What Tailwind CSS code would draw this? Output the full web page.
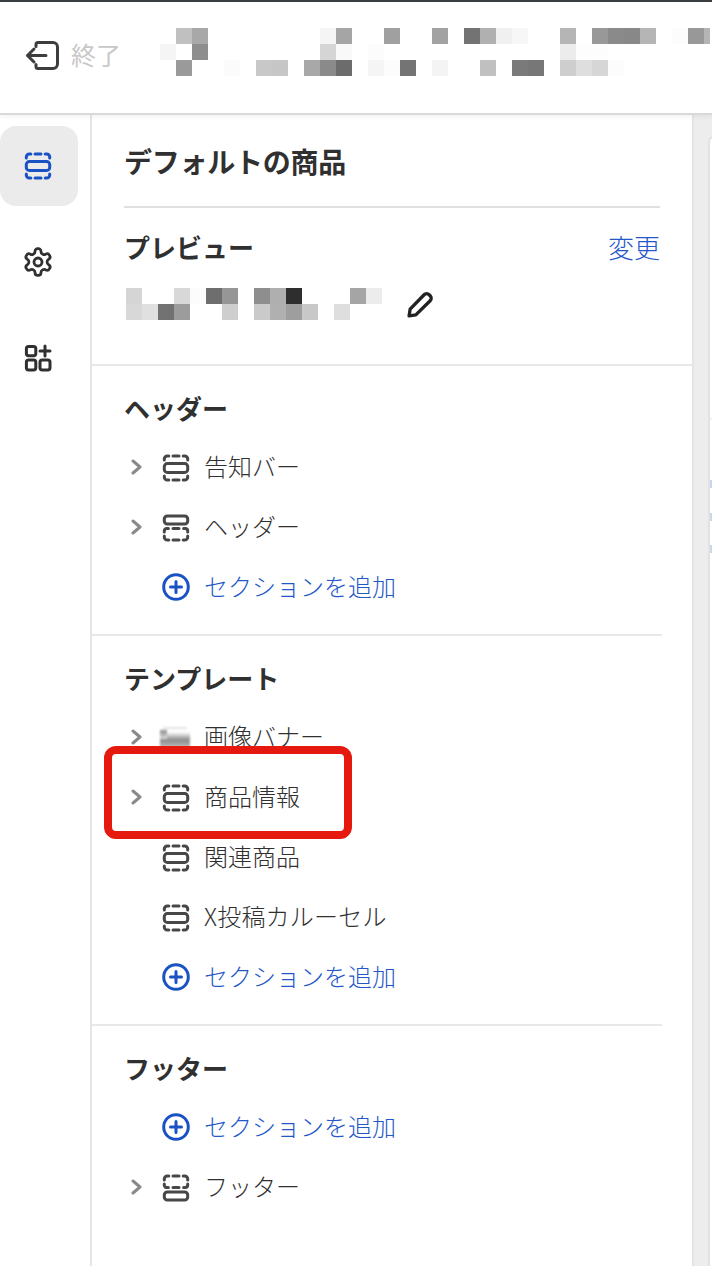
<!doctype html>
<html lang="ja">
<head>
<meta charset="utf-8">
<script src="https://cdn.jsdelivr.net/npm/@tailwindcss/browser@4"></script>
</head>
<body>
<div class="relative w-[712px] h-[1266px] overflow-hidden bg-white flex flex-col text-[#303030] font-['Noto_Sans_CJK_JP','Noto_Sans_CJK_SC',sans-serif]">

  <!-- top bar -->
  <header class="relative z-10 h-[115px] shrink-0 border-t-2 border-t-[#3a3d40] border-b-2 border-b-[#d9d9d9] shadow-[0_2px_4px_rgba(0,0,0,0.05)] bg-white flex items-center">
    <svg class="ml-[25px] w-[34px] h-[30px] shrink-0 -mt-[3px]" viewBox="0 0 34 30" fill="none" stroke="#3d3d3d" stroke-width="3" stroke-linecap="round" stroke-linejoin="round">
      <path d="M11 5.5V3.5a2 2 0 0 1 2-2h15a4.5 4.5 0 0 1 4.5 4.5v17a4.5 4.5 0 0 1-4.5 4.5H13a2 2 0 0 1-2-2v-2"/>
      <path d="M2.5 14.5H21M9 8l-6.5 6.5L9 21"/>
    </svg>
    <span class="ml-[12px] text-[25px] leading-none text-[#c8c8c8] -mt-[6px]">終了</span>
    <div class="absolute left-[160px] top-[26px] grid grid-cols-[repeat(35,16px)] grid-rows-[repeat(3,16px)]">
      <i class="col-start-2 row-start-1 bg-[#c0c0c0]"></i><i class="col-start-3 row-start-1 bg-[#a8a8a8]"></i><i class="col-start-11 row-start-1 bg-[#f5f5f5]"></i><i class="col-start-12 row-start-1 bg-[#a5a5a5]"></i><i class="col-start-15 row-start-1 bg-[#a0a0a0]"></i><i class="col-start-18 row-start-1 bg-[#a2a2a2]"></i><i class="col-start-20 row-start-1 bg-[#737373]"></i><i class="col-start-21 row-start-1 bg-[#b0b0b0]"></i><i class="col-start-22 row-start-1 bg-[#f0f0f0]"></i><i class="col-start-23 row-start-1 bg-[#f7f7f7]"></i><i class="col-start-26 row-start-1 bg-[#b5b5b5]"></i><i class="col-start-28 row-start-1 bg-[#989898]"></i><i class="col-start-29 row-start-1 bg-[#8a8a8a]"></i><i class="col-start-30 row-start-1 bg-[#888888]"></i><i class="col-start-31 row-start-1 bg-[#b5b5b5]"></i><i class="col-start-33 row-start-1 bg-[#fcfcfc]"></i><i class="col-start-34 row-start-1 bg-[#989898]"></i><i class="col-start-35 row-start-1 w-[6px] bg-[#b5b5b5]"></i>
      <i class="col-start-1 row-start-2 bg-[#f5f5f5]"></i><i class="col-start-3 row-start-2 bg-[#8e8e8e]"></i><i class="col-start-11 row-start-2 bg-[#d5d5d5]"></i><i class="col-start-12 row-start-2 bg-[#f9f9f9]"></i><i class="col-start-14 row-start-2 bg-[#fcfcfc]"></i><i class="col-start-26 row-start-2 bg-[#ececec]"></i><i class="col-start-27 row-start-2 bg-[#fdfdfd]"></i><i class="col-start-28 row-start-2 bg-[#fdfdfd]"></i>
      <i class="col-start-2 row-start-3 bg-[#9a9a9a]"></i><i class="col-start-5 row-start-3 bg-[#fbfbfb]"></i><i class="col-start-7 row-start-3 bg-[#c8c8c8]"></i><i class="col-start-8 row-start-3 bg-[#c6c6c6]"></i><i class="col-start-10 row-start-3 bg-[#a8a8a8]"></i><i class="col-start-11 row-start-3 bg-[#8a8a8a]"></i><i class="col-start-12 row-start-3 bg-[#6c6c6c]"></i><i class="col-start-14 row-start-3 bg-[#f5f5f5]"></i><i class="col-start-15 row-start-3 bg-[#fcfcfc]"></i><i class="col-start-16 row-start-3 bg-[#747474]"></i><i class="col-start-18 row-start-3 bg-[#f4f4f4]"></i><i class="col-start-21 row-start-3 bg-[#c0c0c0]"></i><i class="col-start-23 row-start-3 bg-[#7a7a7a]"></i><i class="col-start-24 row-start-3 bg-[#777777]"></i><i class="col-start-26 row-start-3 bg-[#cecece]"></i><i class="col-start-27 row-start-3 bg-[#dedede]"></i><i class="col-start-28 row-start-3 bg-[#d6d6d6]"></i><i class="col-start-29 row-start-3 bg-[#fcfcfc]"></i>
    </div>
  </header>

  <div class="flex flex-1 min-h-0">
    <!-- rail -->
    <nav class="w-[92px] shrink-0 border-r-2 border-r-[#e5e5e5] flex flex-col pt-[11px]">
      <div class="w-[78px] h-[80px] rounded-[16px] bg-[#ebebeb] flex items-center justify-center pr-[2px]">
        <svg class="w-[28px] h-[28px]" viewBox="0 0 28 28" fill="none" stroke="#1a52c6" stroke-width="3" stroke-linecap="round">
          <path d="M2.3 6V5a3 3 0 0 1 3-3h1.5M11 2h6M21.2 2h1.5a3 3 0 0 1 3 3v1M2.3 22v1a3 3 0 0 0 3 3h1.5M11 26h6M21.2 26h1.5a3 3 0 0 0 3-3v-1"/>
          <rect x="2.3" y="9.6" width="23.4" height="8.8" rx="3"/>
        </svg>
      </div>
      <div class="w-[76px] h-[32px] mt-[40px] flex justify-center">
        <svg class="w-[32px] h-[32px]" viewBox="0 0 24 24" fill="none" stroke="#303030" stroke-width="2.1" stroke-linecap="round" stroke-linejoin="round">
          <path d="M12.22 2h-.44a2 2 0 0 0-2 2v.18a2 2 0 0 1-1 1.73l-.43.25a2 2 0 0 1-2 0l-.15-.08a2 2 0 0 0-2.73.73l-.22.38a2 2 0 0 0 .73 2.73l.15.1a2 2 0 0 1 1 1.72v.51a2 2 0 0 1-1 1.74l-.15.09a2 2 0 0 0-.73 2.73l.22.38a2 2 0 0 0 2.73.73l.15-.08a2 2 0 0 1 2 0l.43.25a2 2 0 0 1 1 1.73V20a2 2 0 0 0 2 2h.44a2 2 0 0 0 2-2v-.18a2 2 0 0 1 1-1.73l.43-.25a2 2 0 0 1 2 0l.15.08a2 2 0 0 0 2.73-.73l.22-.39a2 2 0 0 0-.73-2.73l-.15-.08a2 2 0 0 1-1-1.74v-.5a2 2 0 0 1 1-1.74l.15-.09a2 2 0 0 0 .73-2.73l-.22-.38a2 2 0 0 0-2.73-.73l-.15.08a2 2 0 0 1-2 0l-.43-.25a2 2 0 0 1-1-1.73V4a2 2 0 0 0-2-2z"/>
          <circle cx="12" cy="12" r="3"/>
        </svg>
      </div>
      <div class="w-[76px] h-[28px] mt-[66px] flex justify-center">
        <svg class="w-[28px] h-[28px]" viewBox="0 0 28 28" fill="none" stroke="#303030" stroke-width="3" stroke-linecap="round" stroke-linejoin="round">
          <rect x="2.4" y="2.4" width="9.4" height="9.4" rx="2.2"/>
          <rect x="2.4" y="16" width="9.4" height="10" rx="2.2"/>
          <rect x="16" y="16" width="10" height="10" rx="2.2"/>
          <path d="M21 2v10M16 7h10"/>
        </svg>
      </div>
    </nav>

    <!-- panel -->
    <main class="w-[600px] shrink-0">
      <div class="pl-[33px] pr-[32px]">
        <h1 class="h-[91px] flex items-center text-[28px] leading-none font-semibold -ml-[1px] tracking-[-0.25px]">デフォルトの商品</h1>
        <div class="-ml-[1px] h-[2px] bg-[#e0e0e0]"></div>
        <div class="mt-[19px] h-[40px] flex items-center justify-between">
          <h2 class="text-[26px] font-semibold leading-none -ml-[1px]">プレビュー</h2>
          <a class="text-[26px] leading-none text-[#2458c8] font-light">変更</a>
        </div>
        <div class="mt-[21px] pb-[44px] flex items-start">
          <div class="w-[256px] grid grid-cols-[repeat(16,16px)] grid-rows-[repeat(2,16px)] ml-[1px]">
            <i class="col-start-1 row-start-1 bg-[#d5d5d5]"></i><i class="col-start-4 row-start-1 bg-[#d8d8d8]"></i><i class="col-start-5 row-start-1 bg-[#fcfcfc]"></i><i class="col-start-6 row-start-1 bg-[#6e6e6e]"></i><i class="col-start-7 row-start-1 bg-[#969696]"></i><i class="col-start-9 row-start-1 bg-[#8e8e8e]"></i><i class="col-start-10 row-start-1 bg-[#afafaf]"></i><i class="col-start-11 row-start-1 bg-[#2e2e2e]"></i><i class="col-start-15 row-start-1 bg-[#a5a5a5]"></i><i class="col-start-16 row-start-1 bg-[#ececec]"></i>
            <i class="col-start-1 row-start-2 bg-[#d8d8d8]"></i><i class="col-start-2 row-start-2 bg-[#e0e0e0]"></i><i class="col-start-3 row-start-2 bg-[#727272]"></i><i class="col-start-4 row-start-2 bg-[#9c9c9c]"></i><i class="col-start-7 row-start-2 bg-[#cecece]"></i><i class="col-start-9 row-start-2 bg-[#cacaca]"></i><i class="col-start-10 row-start-2 bg-[#b0b0b0]"></i><i class="col-start-11 row-start-2 bg-[#9e9e9e]"></i><i class="col-start-12 row-start-2 bg-[#c8c8c8]"></i><i class="col-start-14 row-start-2 bg-[#dedede]"></i>
          </div>
          <svg class="ml-[25px] mt-[3px] w-[27px] h-[27px] shrink-0" viewBox="0 0 26 26" fill="none" stroke="#222222" stroke-width="3.2" stroke-linejoin="round" stroke-linecap="round">
            <path d="M2 24l1-6.5L16.5 3.6a3.4 3.4 0 0 1 4.8 0l1 1a3.4 3.4 0 0 1 0 4.8L8.5 23z"/>
          </svg>
        </div>
      </div>

      <!-- header group -->
      <section class="border-t-2 border-t-[#e8e8e8] pb-[18px]">
        <h2 class="h-[70px] pt-[30px] pl-[32px] text-[26px] leading-[24px] font-semibold">ヘッダー</h2>
        <div class="h-[60px] flex items-center pl-[33px]">
          <svg class="ml-[6px] w-[31px] h-[16px] shrink-0 mt-[2px]" viewBox="0 0 31 16" fill="none" stroke="#8a8a8a" stroke-width="3" stroke-linecap="round" stroke-linejoin="round"><path d="M2 2l7 6-7 6"/></svg>
          <svg class="w-[28px] h-[28px] shrink-0 mt-[3px]" viewBox="0 0 28 28" fill="none" stroke="#474747" stroke-width="3" stroke-linecap="round"><path d="M2.3 6V5a3 3 0 0 1 3-3h1.5M11 2h6M21.2 2h1.5a3 3 0 0 1 3 3v1M2.3 22v1a3 3 0 0 0 3 3h1.5M11 26h6M21.2 26h1.5a3 3 0 0 0 3-3v-1"/><rect x="2.3" y="9.6" width="23.4" height="8.8" rx="3"/></svg>
          <span class="ml-[14px] text-[24px] leading-none text-[#303030] font-light">告知バー</span>
        </div>
        <div class="h-[60px] flex items-center pl-[33px]">
          <svg class="ml-[6px] w-[31px] h-[16px] shrink-0 mt-[2px]" viewBox="0 0 31 16" fill="none" stroke="#8a8a8a" stroke-width="3" stroke-linecap="round" stroke-linejoin="round"><path d="M2 2l7 6-7 6"/></svg>
          <svg class="w-[28px] h-[28px] shrink-0 mt-[3px]" viewBox="0 0 28 28" fill="none" stroke="#474747" stroke-width="3" stroke-linecap="round"><rect x="2.3" y="2" width="23.4" height="8" rx="3"/><path d="M2.3 18v-1a2.6 2.6 0 0 1 2.6-2.6h1.5M11 14.4h6M21.6 14.4h1.5a2.6 2.6 0 0 1 2.6 2.6v1M2.3 22v1a3 3 0 0 0 3 3h1.5M11 26h6M21.2 26h1.5a3 3 0 0 0 3-3v-1"/></svg>
          <span class="ml-[14px] text-[24px] leading-none text-[#303030] font-light">ヘッダー</span>
        </div>
        <div class="h-[60px] flex items-center pl-[70px]">
          <svg class="w-[28px] h-[28px] shrink-0 mt-[1px]" viewBox="0 0 28 28" fill="none" stroke="#1a52c6" stroke-width="3" stroke-linecap="round"><circle cx="14" cy="14" r="12.3"/><path d="M14 8.5v11M8.5 14h11"/></svg>
          <span class="ml-[14px] text-[24px] leading-none text-[#2458c8] font-light">セクションを追加</span>
        </div>
      </section>

      <!-- template group -->
      <section class="border-t-2 border-t-[#e8e8e8] mr-[30px] pb-[18px]">
        <h2 class="h-[70px] pt-[30px] pl-[32px] text-[26px] leading-[24px] font-semibold">テンプレート</h2>
        <div class="h-[60px] flex items-center pl-[33px]">
          <svg class="ml-[6px] w-[31px] h-[16px] shrink-0 mt-[2px]" viewBox="0 0 31 16" fill="none" stroke="#8a8a8a" stroke-width="3" stroke-linecap="round" stroke-linejoin="round"><path d="M2 2l7 6-7 6"/></svg>
          <div class="relative w-[30px] h-[20px] shrink-0 -ml-[2px] mt-[1px] blur-[1px] bg-[linear-gradient(#ffffff_0%,#ffffff_25%,#8c8c8c_65%,#b8b8b8_100%)]">
            <div class="absolute left-0 top-[3px] w-[7px] h-[9px] bg-[linear-gradient(#8a8a8a,#e0e0e0)]"></div>
            <div class="absolute left-[3px] top-0 w-[24px] h-[2px] bg-[#e4e4e4]"></div>
          </div>
          <span class="ml-[14px] text-[24px] leading-none text-[#303030] font-light">画像バナー</span>
        </div>
        <div class="h-[60px] flex items-center pl-[33px]">
          <svg class="ml-[6px] w-[31px] h-[16px] shrink-0 mt-[2px]" viewBox="0 0 31 16" fill="none" stroke="#8a8a8a" stroke-width="3" stroke-linecap="round" stroke-linejoin="round"><path d="M2 2l7 6-7 6"/></svg>
          <svg class="w-[28px] h-[28px] shrink-0 mt-[3px]" viewBox="0 0 28 28" fill="none" stroke="#474747" stroke-width="3" stroke-linecap="round"><path d="M2.3 6V5a3 3 0 0 1 3-3h1.5M11 2h6M21.2 2h1.5a3 3 0 0 1 3 3v1M2.3 22v1a3 3 0 0 0 3 3h1.5M11 26h6M21.2 26h1.5a3 3 0 0 0 3-3v-1"/><rect x="2.3" y="9.6" width="23.4" height="8.8" rx="3"/></svg>
          <span class="ml-[14px] text-[24px] leading-none text-[#303030] font-light">商品情報</span>
        </div>
        <div class="h-[60px] flex items-center pl-[70px]">
          <svg class="w-[28px] h-[28px] shrink-0 mt-[3px]" viewBox="0 0 28 28" fill="none" stroke="#474747" stroke-width="3" stroke-linecap="round"><path d="M2.3 6V5a3 3 0 0 1 3-3h1.5M11 2h6M21.2 2h1.5a3 3 0 0 1 3 3v1M2.3 22v1a3 3 0 0 0 3 3h1.5M11 26h6M21.2 26h1.5a3 3 0 0 0 3-3v-1"/><rect x="2.3" y="9.6" width="23.4" height="8.8" rx="3"/></svg>
          <span class="ml-[14px] text-[24px] leading-none text-[#303030] font-light">関連商品</span>
        </div>
        <div class="h-[60px] flex items-center pl-[70px]">
          <svg class="w-[28px] h-[28px] shrink-0 mt-[3px]" viewBox="0 0 28 28" fill="none" stroke="#474747" stroke-width="3" stroke-linecap="round"><path d="M2.3 6V5a3 3 0 0 1 3-3h1.5M11 2h6M21.2 2h1.5a3 3 0 0 1 3 3v1M2.3 22v1a3 3 0 0 0 3 3h1.5M11 26h6M21.2 26h1.5a3 3 0 0 0 3-3v-1"/><rect x="2.3" y="9.6" width="23.4" height="8.8" rx="3"/></svg>
          <span class="ml-[14px] text-[24px] leading-none text-[#303030] font-light tracking-[0.2px]">X投稿カルーセル</span>
        </div>
        <div class="h-[60px] flex items-center pl-[70px]">
          <svg class="w-[28px] h-[28px] shrink-0 mt-[1px]" viewBox="0 0 28 28" fill="none" stroke="#1a52c6" stroke-width="3" stroke-linecap="round"><circle cx="14" cy="14" r="12.3"/><path d="M14 8.5v11M8.5 14h11"/></svg>
          <span class="ml-[14px] text-[24px] leading-none text-[#2458c8] font-light">セクションを追加</span>
        </div>
      </section>

      <!-- footer group -->
      <section class="border-t-2 border-t-[#e8e8e8] mr-[30px]">
        <h2 class="h-[70px] pt-[30px] pl-[32px] text-[26px] leading-[24px] font-semibold">フッター</h2>
        <div class="h-[60px] flex items-center pl-[70px]">
          <svg class="w-[28px] h-[28px] shrink-0 mt-[1px]" viewBox="0 0 28 28" fill="none" stroke="#1a52c6" stroke-width="3" stroke-linecap="round"><circle cx="14" cy="14" r="12.3"/><path d="M14 8.5v11M8.5 14h11"/></svg>
          <span class="ml-[14px] text-[24px] leading-none text-[#2458c8] font-light">セクションを追加</span>
        </div>
        <div class="h-[60px] flex items-center pl-[33px]">
          <svg class="ml-[6px] w-[31px] h-[16px] shrink-0 mt-[2px]" viewBox="0 0 31 16" fill="none" stroke="#8a8a8a" stroke-width="3" stroke-linecap="round" stroke-linejoin="round"><path d="M2 2l7 6-7 6"/></svg>
          <svg class="w-[28px] h-[28px] shrink-0 mt-[3px]" viewBox="0 0 28 28" fill="none" stroke="#474747" stroke-width="3" stroke-linecap="round"><path d="M2.3 6V5a3 3 0 0 1 3-3h1.5M11 2h6M21.2 2h1.5a3 3 0 0 1 3 3v1M2.3 10v1a2.6 2.6 0 0 0 2.6 2.6h1.5M11 13.6h6M21.6 13.6h1.5a2.6 2.6 0 0 0 2.6-2.6v-1"/><rect x="2.3" y="18" width="23.4" height="8" rx="3"/></svg>
          <span class="ml-[14px] text-[24px] leading-none text-[#303030] font-light">フッター</span>
        </div>
      </section>
    </main>

    <!-- preview gutter -->
    <aside class="flex-1 bg-[#ededed] border-l-2 border-l-[#e4e4e4] pt-[21px] pl-[14px]">
      <div class="h-full bg-white rounded-tl-[10px] border-l-2 border-t-2 border-[#e2e2e2] pt-[280px]">
        <div class="h-[2px] w-[4px] bg-[#f0f0f0]"></div>
        <div class="mt-[60px] h-[8px] w-[4px] bg-[#c8d6f0]"></div>
        <div class="mt-[25px] h-[8px] w-[4px] bg-[#c8d6f0]"></div>
        <div class="mt-[24px] h-[8px] w-[4px] bg-[#c8d6f0]"></div>
      </div>
    </aside>
  </div>

  <!-- red highlight annotation -->
  <div class="absolute left-[104px] top-[746px] w-[248px] h-[93px] border-[8px] border-[#e6190f] rounded-[12px]"></div>
</div>
</body>
</html>
